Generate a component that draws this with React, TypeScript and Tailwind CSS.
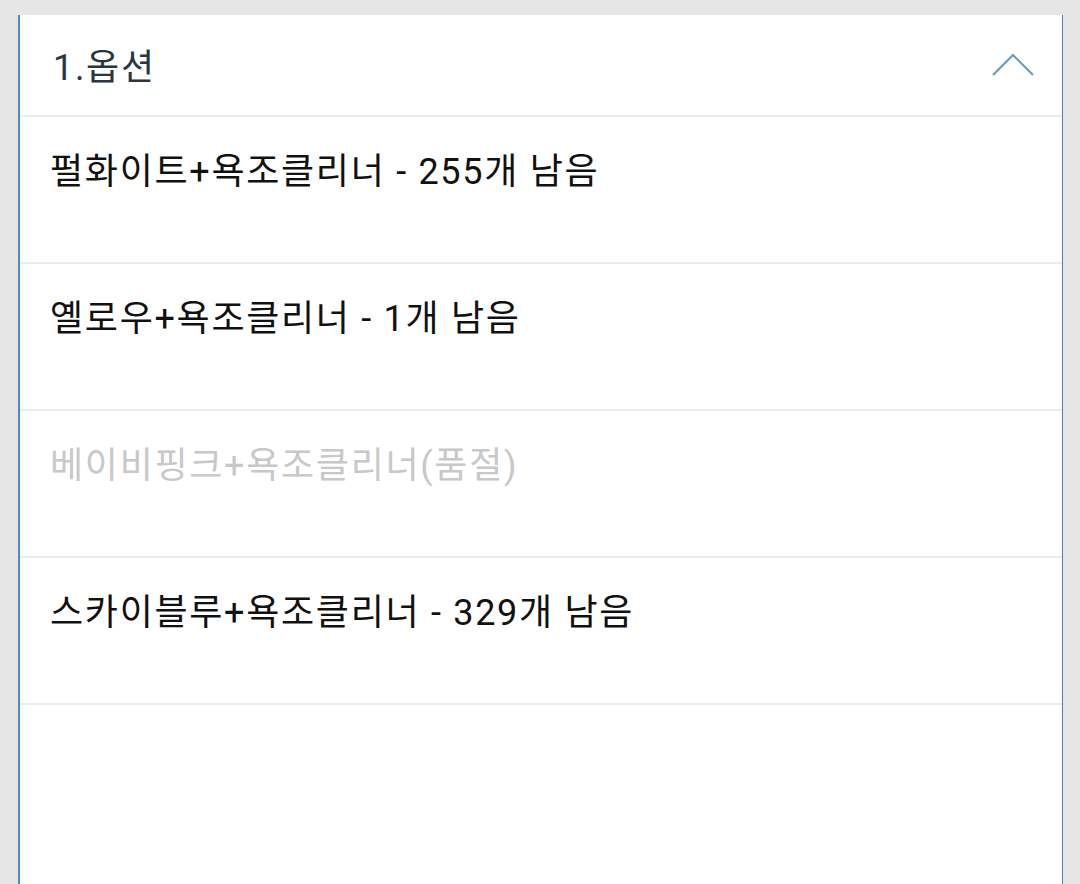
import React, { useState } from 'react';

interface OptionItem {
  label: string;
  soldOut: boolean;
}

const options: OptionItem[] = [
  { label: '펄화이트+욕조클리너 - 255개 남음', soldOut: false },
  { label: '옐로우+욕조클리너 - 1개 남음', soldOut: false },
  { label: '베이비핑크+욕조클리너(품절)', soldOut: true },
  { label: '스카이블루+욕조클리너 - 329개 남음', soldOut: false },
];

const App: React.FC = () => {
  const [open, setOpen] = useState(true);

  return (
    <div
      className="min-h-screen bg-[#e6e6e6] pt-[15px] pl-[18px] pr-[17px]"
      style={{ fontFamily: 'Roboto, "Noto Sans CJK KR", sans-serif' }}
    >
      <div className="bg-white border-l-2 border-l-[#4a8fc0] border-r border-r-[#5a7f99] min-h-[869px]">
        {/* Header */}
        <button
          onClick={() => setOpen(o => !o)}
          className="w-full h-[102px] flex items-center justify-between pl-[33px] pr-[28px] border-b-2 border-[#ececec]"
        >
          <span className="text-[36px] tracking-[1.7px] text-[#2b3640] leading-[42px] pt-[6px]">1.옵션</span>
          <svg width="42" height="24" viewBox="0 0 42 24" fill="none">
            <path d="M1 22 L21 2 L41 22" stroke="#6c9cc3" strokeWidth="2.2" />
          </svg>
        </button>

        {/* Option list */}
        {open && (
          <ul>
            {options.map((opt, i) => (
              <li
                key={i}
                className="h-[147px] border-b-2 border-[#ececec] pl-[30px] pt-[34px]"
              >
                <span
                  className={`text-[36px] tracking-[1.7px] leading-[42px] ${opt.soldOut ? 'text-[#c8c8c8]' : 'text-[#111111]'}`}
                >
                  {opt.label}
                </span>
              </li>
            ))}
          </ul>
        )}
      </div>
    </div>
  );
};

export default App;
